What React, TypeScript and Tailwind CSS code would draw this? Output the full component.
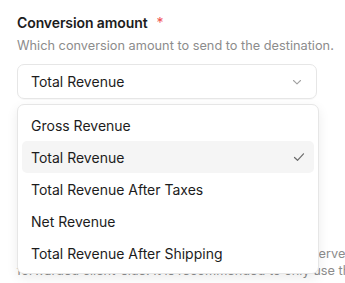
import React from 'react';

const options = [
  'Gross Revenue',
  'Total Revenue',
  'Total Revenue After Taxes',
  'Net Revenue',
  'Total Revenue After Shipping',
];

function Chevron() {
  return (
    <svg width="12" height="12" viewBox="0 0 12 12" fill="none" className="text-[#a3a3a3]">
      <path d="M2.5 4.5L6 7.8L9.5 4.5" stroke="currentColor" strokeWidth="1.1" strokeLinecap="round" strokeLinejoin="round" />
    </svg>
  );
}

function Check() {
  return (
    <svg width="14" height="14" viewBox="0 0 14 14" fill="none" className="text-[#6b6b6b]">
      <path d="M2.5 7.5L5.5 10.3L11.5 3.8" stroke="currentColor" strokeWidth="1.2" strokeLinecap="round" strokeLinejoin="round" />
    </svg>
  );
}

export default function App() {
  const selected = 'Total Revenue';
  return (
    <div className="w-[345px] h-[283px] overflow-hidden bg-white font-['Inter',sans-serif]">
      <div className="relative pl-[17px] pt-[13px]">
        {/* label */}
        <div className="flex items-center gap-[9px] h-[18px]">
          <span className="text-[14px] font-semibold text-[#1c1c1c] tracking-[-0.1px]">Conversion amount</span>
          <span className="text-[14px] text-[#f05252]">*</span>
        </div>
        <p className="mt-[6px] text-[12.75px] leading-[17px] text-[#8c8c8c] whitespace-nowrap">
          Which conversion amount to send to the destination.
        </p>

        {/* select trigger */}
        <div className="mt-[10px] w-[300px] h-[35px] rounded-[7px] border border-[#e6e6e6] flex items-center justify-between pl-[13px] pr-[13px] shadow-[0_1px_1px_rgba(0,0,0,0.03)]">
          <span className="text-[14px] text-[#1c1c1c]">{selected}</span>
          <Chevron />
        </div>

        {/* content behind menu */}
        <div className="mt-[146px] text-[12.75px] leading-[17px] text-[#8c8c8c] whitespace-nowrap">
          <p>Events are sent to the destination directly from a server</p>
          <p>forwarded client-side. It is recommended to only use the</p>
        </div>

        {/* dropdown menu */}
        <div className="absolute left-[17px] top-[104px] w-[302px] rounded-[7px] border border-[#e6e6e6] bg-white p-[4px] shadow-[0_4px_12px_rgba(0,0,0,0.08)]">
          {options.map((o) => (
            <div
              key={o}
              className={
                'h-[32px] flex items-center justify-between pl-[9px] pr-[8px] rounded-[5px] text-[14px] text-[#1c1c1c] ' +
                (o === selected ? 'bg-[#f5f5f5]' : '')
              }
            >
              <span>{o}</span>
              {o === selected && <Check />}
            </div>
          ))}
        </div>
      </div>
    </div>
  );
}
